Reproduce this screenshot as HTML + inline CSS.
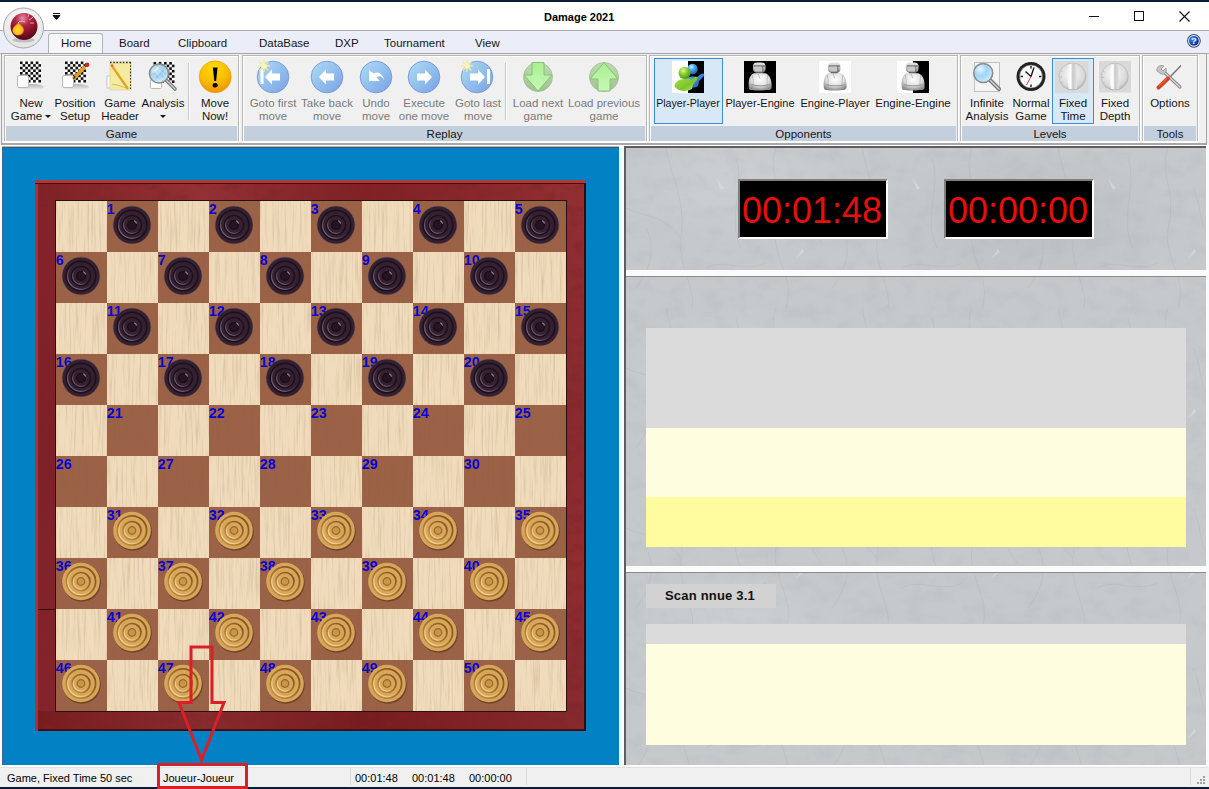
<!DOCTYPE html>
<html><head><meta charset="utf-8">
<style>
*{margin:0;padding:0;box-sizing:border-box}
html,body{width:1209px;height:789px;overflow:hidden;background:#f0f0f0;font-family:"Liberation Sans",sans-serif;position:relative}
.a{position:absolute}
svg{position:absolute;overflow:visible}
#top{left:0;top:0;width:1209px;height:2px;background:#0c1e36}
#title{left:0;top:2px;width:1209px;height:29px;background:#fff;border-bottom:1px solid #a9a9a9}
#ttl{left:544px;top:11px;font-size:11px;line-height:13px;font-weight:bold;color:#000;white-space:nowrap}
#tabs{left:0;top:31px;width:1209px;height:22px;background:#ebeef8}
.tab{position:absolute;top:37px;font-size:11.5px;line-height:13px;color:#151515;white-space:nowrap}
#ribbon{left:1px;top:53px;width:1206px;height:92px;background:#f0f0f0;border:1px solid #a3a3a3;border-bottom:2px solid #a8a8a8}
.grp{position:absolute;top:55px;height:86px;border:1px solid #b6b6b6;border-bottom:none;box-shadow:inset 1px 1px 0 #fff,1px 0 0 #fff,0 1px 0 #fff,0 2px 0 #fff}
.glab{position:absolute;left:1px;right:1px;top:70px;height:15px;background:#c3cfdc;font-size:11.5px;text-align:center;color:#151515;line-height:16px;white-space:nowrap}
.bt{position:absolute;top:97px;font-size:11.5px;color:#151515;text-align:center;white-space:nowrap;line-height:13px;width:90px;margin-left:-45px}
.dis{color:#7a7a7a}
.sep{position:absolute;top:63px;width:1px;height:57px;background:#c8c8c8;box-shadow:1px 0 0 #fff}
.sel{position:absolute;top:58px;height:66px;background:#d8e8f7;border:1px solid #3a8fd4}
#main{left:0;top:145px;width:1209px;height:622px;background:#fbfbfb;border-top:1px solid #fff}
#blue{left:2px;top:147px;width:617px;height:618px;background:#0281c5;border-top:1px solid #3e5a70;border-left:1px solid #3e6a88;box-shadow:0 -1px 0 #b8b8b8}
#status{left:0;top:767px;width:1208px;height:18px;background:#f0f0f0;border-top:1px solid #e2e2e2}
#bot{left:0;top:787px;width:1209px;height:2px;background:#0c1e36}
.st{position:absolute;top:772px;font-size:11px;line-height:13px;color:#000;white-space:nowrap}
.ssep{position:absolute;top:768px;width:1px;height:17px;background:#d9d9d9}
/* board */
#frame{left:35px;top:180px;width:551px;height:551px;
 background:
  linear-gradient(90deg,rgba(0,0,0,.08),rgba(255,255,255,.06) 30%,rgba(0,0,0,.08) 60%,rgba(255,255,255,.05)),
  linear-gradient(180deg,#8c2428,#821f24 40%,#8a2226 70%,#801e22);
 box-shadow:inset 0 3px 0 #ac3a38, inset 0 4px 0 #4a0c10, inset 3px 0 0 #a83434, inset -2px 0 0 #3a0808, inset 0 -2px 0 #4a0c0c}
#board{left:55px;top:200px;width:512px;height:512px;border:1px solid #2b0f0c;
 background:repeating-conic-gradient(#9b6247 0 25%,#f0dcbc 0 50%) 0 0/102px 102px}
.nm{position:absolute;font-size:15.5px;line-height:15px;font-weight:bold;color:#0000e0;white-space:nowrap;transform:scaleX(.92);transform-origin:0 0}
.pc{position:absolute}
/* right */
.pan{position:absolute;left:626px;width:580px;
 background:
  radial-gradient(ellipse 120px 60px at 20% 30%,rgba(255,255,255,.12),transparent),
  radial-gradient(ellipse 150px 80px at 70% 60%,rgba(0,0,0,.05),transparent),
  #c6c9cc}
.clk{position:absolute;top:179px;width:150px;height:60px;background:#000;border:2px solid;border-color:#7f7f7f #fff #fff #7f7f7f}
.clkt{position:absolute;top:191px;font-size:36px;line-height:40px;color:#e4100c;white-space:nowrap}
</style></head><body>
<div id="top" class="a"></div>
<div id="title" class="a"></div>
<div id="ttl" class="a">Damage 2021</div>

<svg style="left:1080px;top:8px" width="120" height="16">
 <line x1="9" y1="8.5" x2="19" y2="8.5" stroke="#111" stroke-width="1"/>
 <rect x="54.5" y="3.5" width="9" height="9" fill="none" stroke="#111" stroke-width="1"/>
 <path d="M99.5 3.5 L109.5 13.5 M109.5 3.5 L99.5 13.5" stroke="#111" stroke-width="1.1"/>
</svg>

<div id="tabs" class="a"></div>

<div class="a" style="left:48px;top:33px;width:55px;height:21px;background:#f5f6f8;border:1px solid #b3b3b3;border-bottom:none;border-radius:3px 3px 0 0"></div>
<div class="a" style="left:0;top:53px;width:48px;height:1px;background:#b3b3b3"></div>
<div class="a" style="left:103px;top:53px;width:1106px;height:1px;background:#b3b3b3"></div>
<div class="tab" style="left:61px">Home</div>
<div class="tab" style="left:119px">Board</div>
<div class="tab" style="left:178px">Clipboard</div>
<div class="tab" style="left:259px">DataBase</div>
<div class="tab" style="left:335px">DXP</div>
<div class="tab" style="left:384px">Tournament</div>
<div class="tab" style="left:475px">View</div>
<svg style="left:1185px;top:33px" width="16" height="16">
 <defs><radialGradient id="hlp" cx="35%" cy="30%" r="70%"><stop offset="0" stop-color="#5a90f0"/><stop offset=".6" stop-color="#1e50c0"/><stop offset="1" stop-color="#0c2c88"/></radialGradient></defs>
 <circle cx="8.9" cy="7.8" r="6.9" fill="#3a4a68"/>
 <circle cx="8.9" cy="7.8" r="5.9" fill="#dff4ff"/>
 <circle cx="8.9" cy="7.8" r="4.9" fill="url(#hlp)"/>
 <text x="9" y="11.3" font-size="9.5" font-weight="bold" fill="#e8f8ff" text-anchor="middle" font-family="Liberation Sans">?</text>
</svg>
<svg style="left:0;top:0" width="60" height="60">
 <defs>
  <radialGradient id="bomb" cx="45%" cy="20%" r="75%"><stop offset="0" stop-color="#e890a8"/><stop offset=".35" stop-color="#b02848"/><stop offset=".7" stop-color="#8a1228"/><stop offset="1" stop-color="#5a0816"/></radialGradient>
  <radialGradient id="btnbg" cx="50%" cy="30%" r="60%"><stop offset="0" stop-color="#fafafa"/><stop offset="1" stop-color="#e6e6e6"/></radialGradient>
  <radialGradient id="fire" cx="45%" cy="60%" r="60%"><stop offset="0" stop-color="#ffe020"/><stop offset="1" stop-color="#f5a020"/></radialGradient>
 </defs>
 <circle cx="23.5" cy="28" r="20" fill="url(#btnbg)" stroke="#a8a8a8" stroke-width="1"/>
 <ellipse cx="23.5" cy="40" rx="11" ry="2.5" fill="rgba(0,0,0,.18)"/>
 <circle cx="24" cy="26.5" r="13.5" fill="url(#bomb)"/>
 <path d="M18.5 22.5 C20 25 24 27 23.5 30.5 C23 34 20.5 35 18 35 C15 35 12.5 33 12.8 30 C13 26.5 17 25.5 18.5 22.5z" fill="url(#fire)" stroke="#f0a020" stroke-width=".5"/>
 <path d="M18 23 Q20 20 25 22" stroke="#f0c0a0" stroke-width="1" fill="none"/>
 <path d="M29 20l3-2 M30 23l4 0 M28 17l1-3 M32 18l3-3" stroke="#f8c0c8" stroke-width=".8"/>
</svg>
<svg style="left:52px;top:12px" width="10" height="10"><path d="M1 1.5h7 M1 3.5h7 L4.5 7.5z" stroke="#111" stroke-width="1" fill="#111"/></svg>

<div id="ribbon" class="a"></div>
<div class="grp" style="left:4px;width:235px"><div class="glab">Game</div></div><div class="grp" style="left:242px;width:405px"><div class="glab">Replay</div></div><div class="grp" style="left:649px;width:309px"><div class="glab">Opponents</div></div><div class="grp" style="left:960px;width:180px"><div class="glab">Levels</div></div><div class="grp" style="left:1142px;width:56px"><div class="glab">Tools</div></div><div class="sel" style="left:654px;width:69px"></div><div class="sel" style="left:1052px;width:42px"></div><div class="sep" style="left:188px"></div><div class="sep" style="left:505px"></div><div class="bt" style="left:31px">New<br>Game<span style="display:inline-block;width:0;height:0;border-left:3px solid transparent;border-right:3px solid transparent;border-top:3px solid #151515;vertical-align:2px;margin-left:3px"></span></div><div class="bt" style="left:75px">Position<br>Setup</div><div class="bt" style="left:120px">Game<br>Header</div><div class="bt" style="left:163px">Analysis<br><span style="display:inline-block;width:0;height:0;border-left:3px solid transparent;border-right:3px solid transparent;border-top:3px solid #151515;vertical-align:2px"></span></div><div class="bt" style="left:215px">Move<br>Now!</div><div class="bt dis" style="left:273px">Goto first<br>move</div><div class="bt dis" style="left:327px">Take back<br>move</div><div class="bt dis" style="left:376px">Undo<br>move</div><div class="bt dis" style="left:424px">Execute<br>one move</div><div class="bt dis" style="left:478px">Goto last<br>move</div><div class="bt dis" style="left:538px">Load next<br>game</div><div class="bt dis" style="left:604px">Load previous<br>game</div><div class="bt" style="left:688px"><span style="font-size:10.6px">Player-Player</span><br></div><div class="bt" style="left:760px"><span style="font-size:11px">Player-Engine</span><br></div><div class="bt" style="left:835px"><span style="font-size:11px">Engine-Player</span><br></div><div class="bt" style="left:913px">Engine-Engine<br></div><div class="bt" style="left:987px">Infinite<br>Analysis</div><div class="bt" style="left:1031px">Normal<br>Game</div><div class="bt" style="left:1073px">Fixed<br>Time</div><div class="bt" style="left:1115px">Fixed<br>Depth</div><div class="bt" style="left:1170px">Options<br></div>
<svg style="left:0;top:0" width="1209" height="100">
 <defs>
  <g id="chk"><rect width="21" height="21" fill="#fff"/><g fill="#111"><rect x="0.000" y="0.000" width="2.63" height="2.63"/><rect x="0.000" y="5.250" width="2.63" height="2.63"/><rect x="0.000" y="10.500" width="2.63" height="2.63"/><rect x="0.000" y="15.750" width="2.63" height="2.63"/><rect x="2.625" y="2.625" width="2.63" height="2.63"/><rect x="2.625" y="7.875" width="2.63" height="2.63"/><rect x="2.625" y="13.125" width="2.63" height="2.63"/><rect x="2.625" y="18.375" width="2.63" height="2.63"/><rect x="5.250" y="0.000" width="2.63" height="2.63"/><rect x="5.250" y="5.250" width="2.63" height="2.63"/><rect x="5.250" y="10.500" width="2.63" height="2.63"/><rect x="5.250" y="15.750" width="2.63" height="2.63"/><rect x="7.875" y="2.625" width="2.63" height="2.63"/><rect x="7.875" y="7.875" width="2.63" height="2.63"/><rect x="7.875" y="13.125" width="2.63" height="2.63"/><rect x="7.875" y="18.375" width="2.63" height="2.63"/><rect x="10.500" y="0.000" width="2.63" height="2.63"/><rect x="10.500" y="5.250" width="2.63" height="2.63"/><rect x="10.500" y="10.500" width="2.63" height="2.63"/><rect x="10.500" y="15.750" width="2.63" height="2.63"/><rect x="13.125" y="2.625" width="2.63" height="2.63"/><rect x="13.125" y="7.875" width="2.63" height="2.63"/><rect x="13.125" y="13.125" width="2.63" height="2.63"/><rect x="13.125" y="18.375" width="2.63" height="2.63"/><rect x="15.750" y="0.000" width="2.63" height="2.63"/><rect x="15.750" y="5.250" width="2.63" height="2.63"/><rect x="15.750" y="10.500" width="2.63" height="2.63"/><rect x="15.750" y="15.750" width="2.63" height="2.63"/><rect x="18.375" y="2.625" width="2.63" height="2.63"/><rect x="18.375" y="7.875" width="2.63" height="2.63"/><rect x="18.375" y="13.125" width="2.63" height="2.63"/><rect x="18.375" y="18.375" width="2.63" height="2.63"/></g></g>
  <linearGradient id="shd" x1="0" y1="0" x2="0" y2="1"><stop offset="0" stop-color="#000" stop-opacity=".25"/><stop offset="1" stop-color="#000" stop-opacity="0"/></linearGradient>
  <linearGradient id="blu" x1="0" y1="0" x2="1" y2="1"><stop offset="0" stop-color="#b4dcf6"/><stop offset=".5" stop-color="#92c0ee"/><stop offset="1" stop-color="#7aa0e0"/></linearGradient>
  <linearGradient id="grn" x1="0" y1="0" x2="0" y2="1"><stop offset="0" stop-color="#c0dcb0"/><stop offset="1" stop-color="#9ec28c"/></linearGradient>
  <linearGradient id="grna" x1="0" y1="0" x2="0" y2="1"><stop offset="0" stop-color="#a8f090"/><stop offset="1" stop-color="#c8f8b8"/></linearGradient>
  <radialGradient id="orn" cx="45%" cy="25%" r="80%"><stop offset="0" stop-color="#ffe000"/><stop offset=".6" stop-color="#f8b800"/><stop offset="1" stop-color="#ee8a00"/></radialGradient>
  <radialGradient id="lens" cx="35%" cy="30%" r="70%"><stop offset="0" stop-color="#e8f8ff"/><stop offset=".5" stop-color="#9fd4f4"/><stop offset="1" stop-color="#c8ecfc"/></radialGradient>
  <radialGradient id="dial" cx="45%" cy="40%" r="60%"><stop offset="0" stop-color="#fafafa"/><stop offset=".8" stop-color="#d8d8d8"/><stop offset="1" stop-color="#b8b8b8"/></radialGradient>
  <linearGradient id="dialk" x1="0" y1="0" x2="1" y2="0"><stop offset="0" stop-color="#f4f4f4"/><stop offset=".35" stop-color="#ffffff"/><stop offset=".55" stop-color="#c8c8c8"/><stop offset="1" stop-color="#e4e4e4"/></linearGradient>
  <radialGradient id="robo" cx="40%" cy="30%" r="70%"><stop offset="0" stop-color="#ffffff"/><stop offset=".6" stop-color="#d0d0d0"/><stop offset="1" stop-color="#707070"/></radialGradient>
  <linearGradient id="rhead" x1="0" y1="0" x2="0" y2="1"><stop offset="0" stop-color="#e8e8e8"/><stop offset=".6" stop-color="#b8b8b8"/><stop offset="1" stop-color="#6a6a6a"/></linearGradient>
  <radialGradient id="rbody" cx="50%" cy="35%" r="65%"><stop offset="0" stop-color="#ffffff"/><stop offset=".55" stop-color="#e4e4e4"/><stop offset="1" stop-color="#8c8c8c"/></radialGradient>
  <g id="robot">
   <rect x="12" y="10.5" width="6.5" height="3.5" fill="#4a4a4a"/>
   <path d="M4.8 26.5 C4.2 20 5.2 14.5 9.5 12.3 L21.5 12.3 C26.5 14.5 28 20 27.6 26.5 C27.2 28.8 25 29.4 23 29 C18 29.8 12 29.8 8 29 C6 29.2 5 28.5 4.8 26.5z" fill="url(#rbody)"/>
   <path d="M8 14 C10 19 9 24 8.5 28 M24 14 C22.5 19 23 24 23.5 28" stroke="#a0a0a0" stroke-width=".6" fill="none"/>
   <path d="M7 23.8 C13 25 20 25 26 23.8" stroke="#9a9a9a" stroke-width="1.1" fill="none"/>
   <path d="M14 13 L16 17.5" stroke="#9a9a9a" stroke-width=".6"/>
   <rect x="9" y="1.5" width="12.5" height="10.3" rx="4" fill="url(#rhead)"/>
   <path d="M9.8 5 L20.8 5" stroke="#3a3a3a" stroke-width=".9"/>
   <rect x="10.5" y="5.4" width="8" height="5.2" rx="1.6" fill="#c4c8c8"/>
   <path d="M18.8 5.4 L18.8 10.5" stroke="#505050" stroke-width=".7"/>
  </g>
  <g id="star"><g stroke="#f4ea9c" stroke-width="1.3" stroke-linecap="round"><path d="M0 -5.5V5.5M-5.5 0H5.5M-4 -4L4 4M-4 4L4 -4"/></g><circle r="2.8" fill="#faf4c0"/></g>
 </defs>
 <!-- New Game -->
 <ellipse cx="31" cy="87" rx="13" ry="3" fill="url(#shd)"/>
 <use href="#chk" x="20" y="61.5"/>
 <rect x="17.5" y="75.5" width="11" height="12" rx="1.5" fill="#fdfdfd" stroke="#b8b8b8" stroke-width="1"/>
 <!-- Position Setup -->
 <ellipse cx="76" cy="87" rx="13" ry="3" fill="url(#shd)"/>
 <use href="#chk" x="65" y="61.5"/>
 <rect x="62.5" y="75.5" width="11" height="12" rx="1.5" fill="#fdfdfd" stroke="#b8b8b8" stroke-width="1"/>
 <path d="M73.5 79 L85 66.5" stroke="#e0a020" stroke-width="3.5" stroke-linecap="butt"/>
 <path d="M73.5 79 L75 76" stroke="#333" stroke-width="1.5"/>
 <circle cx="87" cy="64.8" r="2.4" fill="#d02828"/>
 <!-- Game Header -->
 <rect x="107" y="76" width="4" height="12" fill="#fafafa" stroke="#bbb" stroke-width=".8"/>
 <rect x="110" y="62" width="21" height="28" fill="#f4eba0" stroke="#d8cf80" stroke-width=".6"/>
 <path d="M110 62.5 h21" stroke="#333" stroke-width="1.6" stroke-dasharray="1.6 1.6"/>
 <path d="M130.5 62 v27" stroke="#333" stroke-width="1.1" stroke-dasharray="1.6 1.6"/>
 <path d="M112 84 Q120 85 128 89" stroke="#b8b060" stroke-width=".8" fill="none"/>
 <path d="M112 66 L128 89" stroke="#e3a224" stroke-width="2.2"/>
 <circle cx="112" cy="65.5" r="1.3" fill="#e06060"/>
 <!-- Analysis -->
 <use href="#chk" x="153.5" y="62"/>
 <rect x="150.5" y="78.5" width="11" height="10" rx="1" fill="#fdfdfd" stroke="#b8b8b8" stroke-width="1"/>
 <path d="M166 80 L175 89" stroke="#777" stroke-width="3.6" stroke-linecap="round"/>
 <path d="M166 80 L175 89" stroke="#c8c8c8" stroke-width="1.4" stroke-linecap="round"/>
 <circle cx="159" cy="73.5" r="9.5" fill="url(#lens)" fill-opacity=".92" stroke="#8a8a8a" stroke-width="1.6"/>
 <!-- Move Now -->
 <circle cx="215.2" cy="76.8" r="16" fill="url(#orn)" stroke="#e89a10" stroke-width=".6"/>
 <path d="M212.8 67.5 L217.6 67.5 L216.1 81 L214.3 81z" fill="#000"/>
 <ellipse cx="215.2" cy="85.3" rx="2.6" ry="2.3" fill="#000"/>
 <!-- Replay blue circles -->
 <g stroke="#7c9ed8" stroke-width="1" fill="url(#blu)">
  <circle cx="273" cy="77" r="15.8"/><circle cx="327" cy="77" r="15.8"/><circle cx="376" cy="77" r="15.8"/><circle cx="424" cy="77" r="15.8"/><circle cx="477" cy="77" r="15.8"/>
 </g>
 <g fill="#fff">
  <rect x="260.5" y="69" width="3" height="15"/><path d="M265 77 L272 69.5 L272 73.5 L280 73.5 L280 80.5 L272 80.5 L272 84.5z"/>
  <path d="M319 77 L326 69.5 L326 73.5 L334 73.5 L334 80.5 L326 80.5 L326 84.5z"/>
  <path d="M369 70 L369 81 L380 81 L376.5 77.5 C379 75.5 382 76 384 80 C383 73 377 71 373.5 73.5z"/>
  <path d="M432 77 L425 69.5 L425 73.5 L417 73.5 L417 80.5 L425 80.5 L425 84.5z"/>
  <rect x="487" y="69" width="3" height="15"/><path d="M485 77 L478 69.5 L478 73.5 L470 73.5 L470 80.5 L478 80.5 L478 84.5z"/>
 </g>
 <use href="#star" x="264" y="66"/><use href="#star" x="467" y="66"/>
 <!-- green -->
 <circle cx="538" cy="77" r="14.5" fill="url(#grn)" stroke="#a4bc98" stroke-width=".8"/>
 <path d="M532 62.5 L544 62.5 L544 75 L552 75 L538 91 L524 75 L532 75z" fill="url(#grna)" stroke="#88c078" stroke-width="1"/>
 <circle cx="604" cy="77" r="14.5" fill="url(#grn)" stroke="#a4bc98" stroke-width=".8"/>
 <path d="M598 91 L610 91 L610 79 L618 79 L604 62.5 L590 79 L598 79z" fill="url(#grna)" stroke="#88c078" stroke-width="1"/>
 <!-- opponents -->
 <rect x="672" y="61" width="16" height="32" fill="#fff"/><rect x="688" y="61" width="16" height="32" fill="#000"/>
 <defs>
  <radialGradient id="gb" cx="40%" cy="30%" r="70%"><stop offset="0" stop-color="#c8ecff"/><stop offset=".45" stop-color="#4aa8ec"/><stop offset="1" stop-color="#1a64c0"/></radialGradient>
  <radialGradient id="gg" cx="40%" cy="30%" r="70%"><stop offset="0" stop-color="#e0f8a0"/><stop offset=".45" stop-color="#8cd030"/><stop offset="1" stop-color="#4a9a10"/></radialGradient>
  <linearGradient id="gbb" x1="0" y1="0" x2="1" y2="1"><stop offset="0" stop-color="#5ab4f0"/><stop offset="1" stop-color="#1a5cb8"/></linearGradient>
  <linearGradient id="ggb" x1="0" y1="0" x2="1" y2="1"><stop offset="0" stop-color="#a8e050"/><stop offset=".6" stop-color="#7cc428"/><stop offset="1" stop-color="#c8e870"/></linearGradient>
 </defs>
 <path d="M685 79 C688 76 694 76 697 77 L702 73.5 C704 73 705 75 703.5 76.5 L699 81 L698 86 C695 88 690 88 687 86z" fill="url(#gbb)"/>
 <circle cx="692.5" cy="69" r="5.2" fill="url(#gb)"/>
 <path d="M677 81.5 C680 78.5 688 78 692 79.5 L695 77 C697 76 698 78 697 79.5 L693 84.5 L692 89 C688 91.5 681 91.5 678 89.5 L676 88 C674 87 674 84 677 81.5z" fill="url(#ggb)"/>
 <circle cx="684.5" cy="73" r="6" fill="url(#gg)"/>
 <rect x="744" y="61" width="32" height="32" fill="#000"/><use href="#robot" x="744" y="61"/>
 <rect x="819" y="61" width="32" height="32" fill="#fff"/><use href="#robot" x="819" y="61"/>
 <rect x="897" y="61" width="16" height="32" fill="#fff"/><rect x="913" y="61" width="16" height="32" fill="#000"/><use href="#robot" x="897" y="61"/>
 <!-- levels -->
 <rect x="974.5" y="62.5" width="25" height="29" fill="#f4f4f4" stroke="#c0c0c0" stroke-width="1"/>
 <path d="M990 80 L999 89" stroke="#7a7a7a" stroke-width="4" stroke-linecap="round"/>
 <path d="M990 80 L999 89" stroke="#cfcfcf" stroke-width="1.5" stroke-linecap="round"/>
 <circle cx="983.2" cy="73" r="9.5" fill="url(#lens)" stroke="#8c8c8c" stroke-width="1.6"/>
 <circle cx="1031" cy="76.5" r="14.5" fill="#222"/><circle cx="1031" cy="76.5" r="11.5" fill="#fafafa" stroke="#555" stroke-width=".6"/>
 <g stroke="#222" stroke-width="1.5"><path d="M1031 66v2.5M1031 84.5v2.5M1020.5 76.5h2.5M1039 76.5h2.5"/></g>
 <path d="M1031 76.5 L1025.5 71.5 M1031 76.5 L1034 67.5" stroke="#111" stroke-width="1.3"/>
 <path d="M1031 76.5 L1026.5 85" stroke="#d02020" stroke-width=".9"/>
 <rect x="1055" y="61" width="33.5" height="32" fill="#d9d9d9"/>
 <circle cx="1072.5" cy="76.5" r="13.5" fill="url(#dial)" stroke="#b0b0b0" stroke-width=".6"/>
 <path d="M1069 64.5 C1071 63.5 1075 63.5 1077 64.5 L1077 88.5 C1075 89.5 1071 89.5 1069 88.5 C1067 82 1067 71 1069 64.5z" fill="url(#dialk)"/><g stroke="#a0a0a0" stroke-width=".6"><path d="M1061 71l1.5 .8M1060 77h1.8M1061 83l1.5 -.8M1063.5 87.5l1 -1.2"/></g>
 <rect x="1099" y="61" width="32" height="31.5" fill="#d9d9d9"/>
 <circle cx="1114.7" cy="76.6" r="13.5" fill="url(#dial)" stroke="#b0b0b0" stroke-width=".6"/>
 <path d="M1111.2 64.8 C1113.2 63.8 1117.2 63.8 1119.2 64.8 L1119.2 88.8 C1117.2 89.8 1113.2 89.8 1111.2 88.8 C1109.2 82.3 1109.2 71.3 1111.2 64.8z" fill="url(#dialk)"/><g stroke="#a0a0a0" stroke-width=".6"><path d="M1103.2 71.3l1.5 .8M1102.2 77.3h1.8M1103.2 83.3l1.5 -.8M1105.7 87.8l1 -1.2"/></g>
 <!-- options -->
 <path d="M1165 73 L1180 87" stroke="#8a8a8a" stroke-width="3.2" stroke-linecap="round"/>
 <path d="M1165 73 L1180 87" stroke="#d8d8d8" stroke-width="1.2" stroke-linecap="round"/>
 <path d="M1157 71 C1156 67 1160 64.5 1164 66 L1161 69 L1163 71 L1166 68 C1167 72 1165 75 1161 74z" fill="#c4c4c4" stroke="#8a8a8a" stroke-width=".7"/>
 <path d="M1170 77 L1181 65.5" stroke="#7a7a7a" stroke-width="1.6"/>
 <path d="M1158.5 87.5 L1168 78.5" stroke="#d8401c" stroke-width="4" stroke-linecap="round"/>
 <path d="M1159 86 L1167 78.5" stroke="#f07850" stroke-width="1"/>
</svg>

<div id="main" class="a"></div>
<div id="blue" class="a"></div>
<div id="frame" class="a"></div>
<svg style="left:35px;top:180px" width="551" height="551"><filter id="fgr" x="0" y="0" width="100%" height="100%"><feTurbulence type="fractalNoise" baseFrequency="0.06 0.09" numOctaves="3" seed="11"/><feColorMatrix values="0 0 0 0 0.2  0 0 0 0 0.02  0 0 0 0 0.02  2.2 0 0 0 -1.05"/></filter><rect x="3" y="4" width="545" height="545" filter="url(#fgr)" opacity=".7"/></svg>
<div class="a" style="left:38px;top:201px;width:17px;height:510px;background:linear-gradient(180deg,#84222a,#80212a 50%,#86242c);opacity:.85"></div>
<div class="a" style="left:38px;top:609px;width:17px;height:1px;background:#3a0a10"></div>
<div id="board" class="a"></div>
<svg style="left:56px;top:201px" width="510" height="510"><filter id="grain" x="0" y="0" width="100%" height="100%"><feTurbulence type="fractalNoise" baseFrequency="0.5 0.02" numOctaves="3" seed="7"/><feColorMatrix values="0 0 0 0 0.25  0 0 0 0 0.12  0 0 0 0 0.04  1.6 0 0 0 -0.72"/></filter><rect width="510" height="510" filter="url(#grain)" opacity=".3"/></svg>
<div class="nm" style="left:107px;top:201px">1</div>
<div class="nm" style="left:209px;top:201px">2</div>
<div class="nm" style="left:311px;top:201px">3</div>
<div class="nm" style="left:413px;top:201px">4</div>
<div class="nm" style="left:515px;top:201px">5</div>
<div class="nm" style="left:56px;top:252px">6</div>
<div class="nm" style="left:158px;top:252px">7</div>
<div class="nm" style="left:260px;top:252px">8</div>
<div class="nm" style="left:362px;top:252px">9</div>
<div class="nm" style="left:464px;top:252px">10</div>
<div class="nm" style="left:107px;top:303px">11</div>
<div class="nm" style="left:209px;top:303px">12</div>
<div class="nm" style="left:311px;top:303px">13</div>
<div class="nm" style="left:413px;top:303px">14</div>
<div class="nm" style="left:515px;top:303px">15</div>
<div class="nm" style="left:56px;top:354px">16</div>
<div class="nm" style="left:158px;top:354px">17</div>
<div class="nm" style="left:260px;top:354px">18</div>
<div class="nm" style="left:362px;top:354px">19</div>
<div class="nm" style="left:464px;top:354px">20</div>
<div class="nm" style="left:107px;top:405px">21</div>
<div class="nm" style="left:209px;top:405px">22</div>
<div class="nm" style="left:311px;top:405px">23</div>
<div class="nm" style="left:413px;top:405px">24</div>
<div class="nm" style="left:515px;top:405px">25</div>
<div class="nm" style="left:56px;top:456px">26</div>
<div class="nm" style="left:158px;top:456px">27</div>
<div class="nm" style="left:260px;top:456px">28</div>
<div class="nm" style="left:362px;top:456px">29</div>
<div class="nm" style="left:464px;top:456px">30</div>
<div class="nm" style="left:107px;top:507px">31</div>
<div class="nm" style="left:209px;top:507px">32</div>
<div class="nm" style="left:311px;top:507px">33</div>
<div class="nm" style="left:413px;top:507px">34</div>
<div class="nm" style="left:515px;top:507px">35</div>
<div class="nm" style="left:56px;top:558px">36</div>
<div class="nm" style="left:158px;top:558px">37</div>
<div class="nm" style="left:260px;top:558px">38</div>
<div class="nm" style="left:362px;top:558px">39</div>
<div class="nm" style="left:464px;top:558px">40</div>
<div class="nm" style="left:107px;top:609px">41</div>
<div class="nm" style="left:209px;top:609px">42</div>
<div class="nm" style="left:311px;top:609px">43</div>
<div class="nm" style="left:413px;top:609px">44</div>
<div class="nm" style="left:515px;top:609px">45</div>
<div class="nm" style="left:56px;top:660px">46</div>
<div class="nm" style="left:158px;top:660px">47</div>
<div class="nm" style="left:260px;top:660px">48</div>
<div class="nm" style="left:362px;top:660px">49</div>
<div class="nm" style="left:464px;top:660px">50</div>
<svg style="left:0;top:0" width="600" height="740">
 <defs>
  <linearGradient id="hlw" x1="1" y1="0" x2="0" y2="1"><stop offset=".45" stop-color="#f0cc88" stop-opacity="0"/><stop offset=".8" stop-color="#f2d090" stop-opacity="1"/></linearGradient>
  <linearGradient id="dkw" x1="1" y1="0" x2="0" y2="1"><stop offset="0" stop-color="#7a4c1c"/><stop offset=".6" stop-color="#a8772e"/><stop offset="1" stop-color="#c89450"/></linearGradient>
  <linearGradient id="hlb" x1="1" y1="0" x2="0" y2="1"><stop offset=".45" stop-color="#6e5e70" stop-opacity="0"/><stop offset=".8" stop-color="#76667a" stop-opacity="1"/></linearGradient>
  <g id="pb">
   <circle r="19.2" fill="#5a4a58" opacity=".6"/>
   <circle r="18.6" fill="#332030"/>
   <circle r="14.8" fill="none" stroke="#1e0f1c" stroke-width="1.5"/>
   <circle r="13.4" fill="none" stroke="url(#hlb)" stroke-width="1.1"/>
   <circle r="9.6" fill="none" stroke="#1e0f1c" stroke-width="1.4"/>
   <circle r="8.4" fill="none" stroke="url(#hlb)" stroke-width="1"/>
   <circle r="4.4" fill="#261422" stroke="#1a0c18" stroke-width="1.3"/>
   <path d="M2.2 -4.2 A4.6 4.6 0 0 1 4.6 -1.5" fill="none" stroke="#9a8a9c" stroke-width="1.1"/>
  </g>
  <g id="pw">
   <circle cx=".8" cy="1.2" r="19" fill="#4a2e12" opacity=".55"/>
   <circle r="18.8" fill="#d8a65a"/>
   <circle r="14.6" fill="none" stroke="url(#dkw)" stroke-width="1.8"/>
   <circle r="13.2" fill="none" stroke="url(#hlw)" stroke-width="1.3"/>
   <circle r="9" fill="none" stroke="url(#dkw)" stroke-width="1.7"/>
   <circle r="7.7" fill="none" stroke="url(#hlw)" stroke-width="1.2"/>
   <circle r="3.8" fill="#cc9648" stroke="#9a6a2a" stroke-width="1.2"/>
  </g>
 </defs>
<use href="#pb" x="132" y="225"/>
<use href="#pb" x="234" y="225"/>
<use href="#pb" x="336" y="225"/>
<use href="#pb" x="438" y="225"/>
<use href="#pb" x="540" y="225"/>
<use href="#pb" x="81" y="276"/>
<use href="#pb" x="183" y="276"/>
<use href="#pb" x="285" y="276"/>
<use href="#pb" x="387" y="276"/>
<use href="#pb" x="489" y="276"/>
<use href="#pb" x="132" y="327"/>
<use href="#pb" x="234" y="327"/>
<use href="#pb" x="336" y="327"/>
<use href="#pb" x="438" y="327"/>
<use href="#pb" x="540" y="327"/>
<use href="#pb" x="81" y="378"/>
<use href="#pb" x="183" y="378"/>
<use href="#pb" x="285" y="378"/>
<use href="#pb" x="387" y="378"/>
<use href="#pb" x="489" y="378"/>
<use href="#pw" x="132" y="530.5"/>
<use href="#pw" x="234" y="530.5"/>
<use href="#pw" x="336" y="530.5"/>
<use href="#pw" x="438" y="530.5"/>
<use href="#pw" x="540" y="530.5"/>
<use href="#pw" x="81" y="581.5"/>
<use href="#pw" x="183" y="581.5"/>
<use href="#pw" x="285" y="581.5"/>
<use href="#pw" x="387" y="581.5"/>
<use href="#pw" x="489" y="581.5"/>
<use href="#pw" x="132" y="632.5"/>
<use href="#pw" x="234" y="632.5"/>
<use href="#pw" x="336" y="632.5"/>
<use href="#pw" x="438" y="632.5"/>
<use href="#pw" x="540" y="632.5"/>
<use href="#pw" x="81" y="683.5"/>
<use href="#pw" x="183" y="683.5"/>
<use href="#pw" x="285" y="683.5"/>
<use href="#pw" x="387" y="683.5"/>
<use href="#pw" x="489" y="683.5"/>
</svg>

<div class="a" style="left:619px;top:147px;width:2px;height:619px;background:#eafcfe"></div>
<div class="a" style="left:624px;top:146px;width:583px;height:619px;background:#5e5e62"></div>
<div class="pan" style="top:148px;height:122px"></div>
<div class="a" style="left:626px;top:270px;width:580px;height:6px;background:#fbfbfb;border-bottom:1px solid #8a8a8a"></div>
<div class="pan" style="top:277px;height:289px"></div>
<div class="a" style="left:626px;top:566px;width:580px;height:6px;background:#fbfbfb;border-bottom:1px solid #8a8a8a"></div>
<div class="pan" style="top:573px;height:192px"></div>
<div class="a" style="left:1206px;top:146px;width:3px;height:621px;background:#fbfbfb"></div>
<svg style="left:626px;top:148px" width="580" height="617"><filter id="cgr" x="0" y="0" width="100%" height="100%"><feTurbulence type="fractalNoise" baseFrequency="0.05 0.07" numOctaves="4" seed="5"/><feColorMatrix values="0 0 0 0 0.35  0 0 0 0 0.37  0 0 0 0 0.4  2 0 0 0 -0.9"/></filter><defs><pattern id="crk" width="196" height="160" patternUnits="userSpaceOnUse"><g fill="none" stroke="#9a9ea4" stroke-width=".7" opacity=".3"><path d="M40 0 C45 30 60 50 55 90 C52 120 70 140 66 160"/><path d="M110 10 C120 40 100 70 115 100"/><path d="M150 0 C140 25 160 45 150 80 C145 110 170 130 160 160"/><path d="M0 60 C20 70 35 65 55 90"/><path d="M80 120 C95 110 120 125 140 115"/><path d="M10 140 C25 120 30 100 20 80"/><path d="M175 40 C185 60 180 80 196 95"/></g><g fill="#dfe2e6" opacity=".5"><path d="M90 30 l8 10 l-3 2z"/><path d="M170 110 l6 -9 l2 3z"/></g></pattern></defs>
<rect width="580" height="617" filter="url(#cgr)" opacity=".18"/><rect width="580" height="617" fill="url(#crk)"/><rect x="0" y="122" width="580" height="7" fill="#fbfbfb"/><rect x="0" y="128" width="580" height="1" fill="#8a8a8a"/><rect x="0" y="418" width="580" height="6" fill="#fbfbfb"/><rect x="0" y="424" width="580" height="1" fill="#8a8a8a"/></svg>
<div class="clk" style="left:738px"></div>
<div class="clk" style="left:944px"></div>
<div class="clkt" style="left:742px">00:01:48</div>
<div class="clkt" style="left:948px">00:00:00</div>
<div class="a" style="left:646px;top:328px;width:540px;height:100px;background:#dbdbdb"></div>
<div class="a" style="left:646px;top:428px;width:540px;height:69px;background:#fffde0"></div>
<div class="a" style="left:646px;top:497px;width:540px;height:50px;background:#fffc9f"></div>
<div class="a" style="left:646px;top:584px;width:130px;height:24px;background:#d2d2d2"></div>
<div class="a" style="left:665px;top:588px;font-size:13px;line-height:15px;font-weight:bold;color:#111;letter-spacing:.2px;white-space:nowrap">Scan nnue 3.1</div>
<div class="a" style="left:646px;top:624px;width:540px;height:20px;background:#dbdbdb"></div>
<div class="a" style="left:646px;top:644px;width:540px;height:101px;background:#fffde0"></div>

<div id="status" class="a"></div>
<div id="bot" class="a"></div>

<div class="st" style="left:7px">Game, Fixed Time 50 sec</div>
<div class="st" style="left:163px">Joueur-Joueur</div>
<div class="ssep" style="left:350px"></div>
<div class="st" style="left:355px">00:01:48</div>
<div class="st" style="left:412px">00:01:48</div>
<div class="st" style="left:469px">00:00:00</div>
<div class="ssep" style="left:526px"></div>
<div class="ssep" style="left:1190px"></div><svg style="left:1193px;top:774px" width="16" height="14"><g fill="#a0a0a0"><rect x="10" y="2" width="2" height="2"/><rect x="7" y="5" width="2" height="2"/><rect x="10" y="5" width="2" height="2"/><rect x="4" y="8" width="2" height="2"/><rect x="7" y="8" width="2" height="2"/><rect x="10" y="8" width="2" height="2"/></g></svg>
<div class="a" style="left:157px;top:763px;width:91px;height:26px;border:3px solid #dc1f26"></div>
<svg style="left:0;top:0" width="300" height="789"><path d="M191 647 L212 647 L212 702.5 L224 702.5 L201.5 760 L179 702.5 L191 702.5z" fill="none" stroke="#dc1f26" stroke-width="3"/></svg>

</body></html>
